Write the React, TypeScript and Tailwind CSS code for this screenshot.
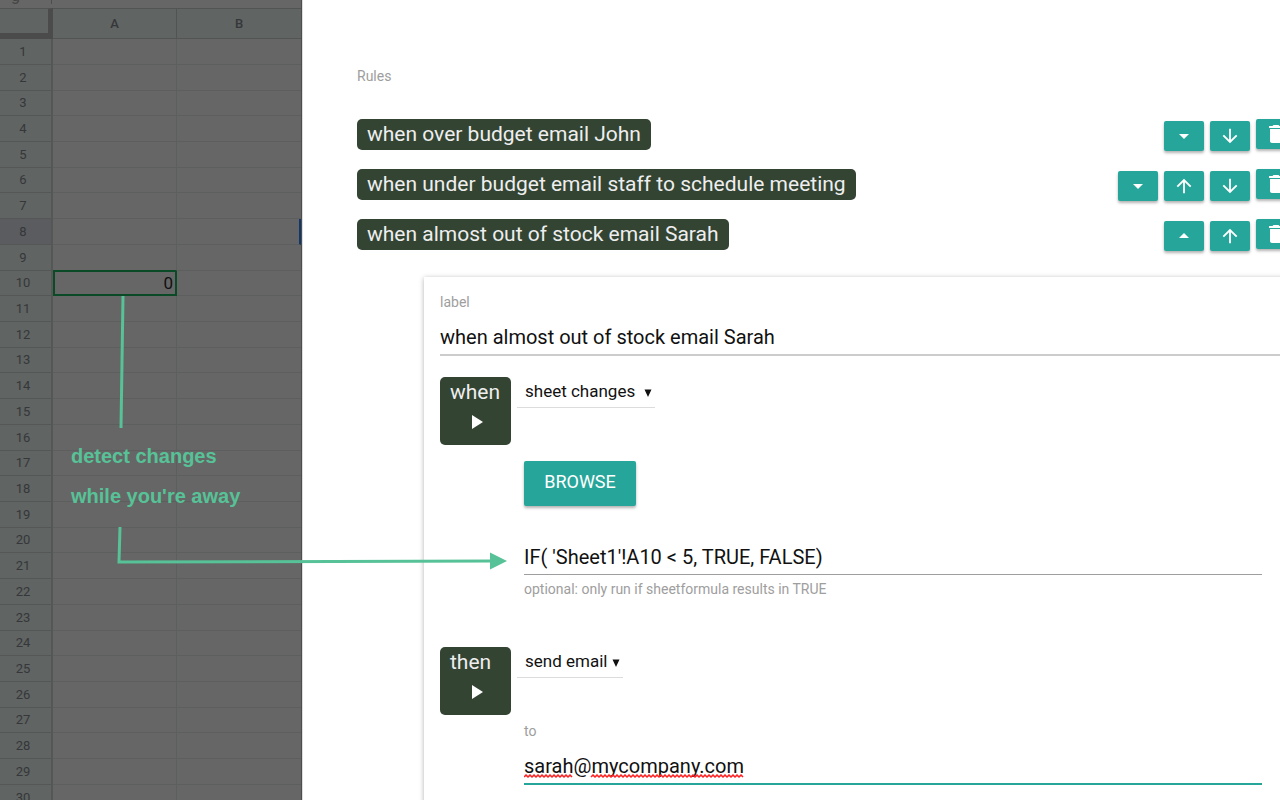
import { useState } from 'react';
import type { ReactNode } from 'react';
import {
  MdArrowDownward,
  MdArrowDropDown,
  MdArrowDropUp,
  MdArrowUpward,
  MdDelete,
  MdPlayArrow,
} from 'react-icons/md';

const ROWS = Array.from({ length: 30 }, (_, i) => i + 1);

const RULES = [
  { label: 'when over budget email John', open: false, up: false, down: true },
  { label: 'when under budget email staff to schedule meeting', open: false, up: true, down: true },
  { label: 'when almost out of stock email Sarah', open: true, up: true, down: false },
];

function Sheet() {
  return (
    <div className="w-[302px] shrink-0 overflow-hidden border-r border-[#4d4d4d] bg-[#666666]">
      <div className="flex h-2 items-start overflow-hidden">
        <span className="flex h-1 w-[51px] items-end pl-[11px] text-base leading-4 text-[#454545]">g</span>
        <span className="h-1 w-px bg-[#4d4d4d]" />
      </div>
      <table className="w-full table-fixed border-separate border-spacing-0 text-[#35373a]">
        <colgroup>
          <col className="w-[53px]" />
          <col className="w-[124px]" />
          <col />
        </colgroup>
        <thead>
          <tr className="h-[31px] bg-[#606462] text-[13px]">
            <td className="border-t border-r-[5px] border-b-[6px] border-t-[#525453] border-r-[#4b4b4b] border-b-[#4b4b4b]" />
            <th className="border-y border-r border-[#525453] p-0 font-medium">A</th>
            <th className="border-y border-[#525453] p-0 font-medium">B</th>
          </tr>
        </thead>
        <tbody>
          {ROWS.map((row) => (
            <tr key={row} className="h-[26px] nth-[7n+3]:h-[25px] nth-[7n+6]:h-[25px]">
              <th
                className={`border-r-2 border-b border-[#545756] p-0 pr-[5px] text-[13px] leading-4 font-normal ${
                  row === 8 ? 'bg-[#5a5c5f]' : 'bg-[#606462]'
                }`}
              >
                {row}
              </th>
              {row === 10 ? (
                <td className="border-2 border-t border-[#0b4a26] p-0 pr-0.5 text-right text-[17px] leading-4 text-[#111]">
                  0
                </td>
              ) : (
                <td
                  className={`border-r border-b border-[#5d5f5e] p-0 ${
                    row === 9 ? 'border-b-[#0b4a26]' : ''
                  }`}
                />
              )}
              <td
                className={`border-b border-[#5d5f5e] p-0 ${
                  row === 8 ? 'border-r-2 border-r-[#12366b]' : ''
                }`}
              />
            </tr>
          ))}
        </tbody>
      </table>
    </div>
  );
}

function Annotation() {
  return (
    <div className="pointer-events-none absolute top-0 left-0 text-[#57c297]">
      <svg width="520" height="580" fill="none" stroke="currentColor" strokeWidth="3">
        <path d="M123 296 L121 428" />
        <path d="M120 527 L119 562 L492 561" />
        <path d="M490 552.5 L507 561 L490 569.5 Z" fill="currentColor" stroke="none" />
      </svg>
      <p className="absolute top-[436px] left-[71px] font-['Liberation_Sans',sans-serif] text-xl leading-10 font-bold whitespace-nowrap">
        detect changes
        <br />
        while you&apos;re away
      </p>
    </div>
  );
}

function IconButton({ label, children }: { label: string; children: ReactNode }) {
  return (
    <button
      type="button"
      aria-label={label}
      className="flex h-[30px] w-10 items-center justify-center rounded-[2px] bg-[#26a69a] text-white shadow-[0_2px_3px_rgba(0,0,0,0.3)]"
    >
      {children}
    </button>
  );
}

function StepButton({ children }: { children: ReactNode }) {
  return (
    <button
      type="button"
      className="flex h-[68px] w-[71px] shrink-0 flex-col rounded-[5px] bg-[#334433] px-[10px] text-left text-[21px] leading-[30px] text-[#eee]"
    >
      {children}
      <MdPlayArrow size={24} className="mt-[3px] self-center text-white" />
    </button>
  );
}

function Picker({ label, value, className }: { label: string; value: string; className: string }) {
  return (
    <div className={`relative ${className}`}>
      <select
        aria-label={label}
        className="h-[31px] w-full appearance-none border-b border-[#dcdcdc] bg-transparent pb-[2px] pl-2 text-[17px] leading-7 text-[#111]"
      >
        <option>{value}</option>
      </select>
      <svg
        className="pointer-events-none absolute top-3 right-[3px]"
        width="8"
        height="8"
        viewBox="0 0 8 8"
        fill="#111"
      >
        <path d="M0.5 0.5h7L4 8z" />
      </svg>
    </div>
  );
}

// red wave under a misspelled word, 4px per period
function Squiggle({ x, width }: { x: number; width: number }) {
  const steps = Math.floor(width / 2);
  const d = Array.from({ length: steps }, (_, i) => `l2 ${i % 2 ? 2 : -2}`).join(' ');
  return <path d={`M${x} 3 ${d}`} />;
}

export default function App() {
  const [label, setLabel] = useState('when almost out of stock email Sarah');
  const [formula, setFormula] = useState("IF( 'Sheet1'!A10 < 5, TRUE, FALSE)");
  const [email, setEmail] = useState('sarah@mycompany.com');

  return (
    <div className="relative flex h-screen overflow-hidden bg-white font-[Roboto,sans-serif]">
      <Sheet />
      <main className="min-w-0 flex-1 overflow-hidden border-l border-[#ddd] pt-[66px] pl-[54px]">
        <div className="-mr-4">
          <p className="text-sm leading-5 text-[#9e9e9e]">Rules</p>

          <ul className="mt-[33px] space-y-[19px]">
            {RULES.map((rule) => (
              <li key={rule.label} className="flex h-[31px] items-start justify-between">
                <span className="rounded-[5px] bg-[#334433] px-[10px] pb-px text-[21px] leading-[30px] text-[#eee]">
                  {rule.label}
                </span>
                <div className="flex gap-[6px]">
                  <div className="flex gap-[6px] pt-[2px]">
                    <IconButton label={rule.open ? 'Collapse' : 'Expand'}>
                      {rule.open ? <MdArrowDropUp size={24} /> : <MdArrowDropDown size={24} />}
                    </IconButton>
                    {rule.up && (
                      <IconButton label="Move up">
                        <MdArrowUpward size={22} />
                      </IconButton>
                    )}
                    {rule.down && (
                      <IconButton label="Move down">
                        <MdArrowDownward size={22} />
                      </IconButton>
                    )}
                  </div>
                  <IconButton label="Delete">
                    <MdDelete size={24} />
                  </IconButton>
                </div>
              </li>
            ))}
          </ul>

          <section className="mt-[27px] ml-[67px] px-4 pt-[15px] pb-10 shadow-[0_1px_5px_rgba(0,0,0,0.3)]">
            <label htmlFor="rule-label" className="block text-sm leading-5 text-[#9e9e9e]">
              label
            </label>
            <input
              id="rule-label"
              value={label}
              onChange={(e) => setLabel(e.target.value)}
              className="mt-2 block h-9 w-full border-b-2 border-[#cccccc] text-xl text-[#111] outline-none"
            />

            <div className="mt-[21px] flex gap-[6px]">
              <StepButton>when</StepButton>
              <div className="min-w-0 flex-1">
                <Picker label="Trigger" value="sheet changes" className="w-[138px]" />
                <div className="pt-[53px] pr-[18px] pl-[7px]">
                  <button
                    type="button"
                    className="block h-[45px] w-28 rounded-[2px] bg-[#26a69a] pb-1 text-lg text-white shadow-[0_2px_3px_rgba(0,0,0,0.3)]"
                  >
                    BROWSE
                  </button>
                  <input
                    id="formula"
                    value={formula}
                    onChange={(e) => setFormula(e.target.value)}
                    className="mt-[33px] block h-9 w-full border-b border-[#9e9e9e] text-xl text-[#111] outline-none"
                  />
                  <label htmlFor="formula" className="mt-1 block text-sm leading-5 text-[#9e9e9e]">
                    optional: only run if sheetformula results in TRUE
                  </label>
                </div>
              </div>
            </div>

            <div className="mt-12 flex gap-[6px]">
              <StepButton>then</StepButton>
              <div className="min-w-0 flex-1">
                <Picker label="Action" value="send email" className="w-[106px]" />
                <div className="pt-[43px] pr-[18px] pl-[7px]">
                  <label htmlFor="to" className="block text-sm leading-5 text-[#9e9e9e]">
                    to
                  </label>
                  <div className="relative mt-2">
                    <input
                      id="to"
                      value={email}
                      onChange={(e) => setEmail(e.target.value)}
                      className="block h-9 w-full border-b-2 border-[#26a69a] text-xl text-[#111] outline-none"
                    />
                    <svg
                      className="pointer-events-none absolute bottom-[7px] left-0"
                      width="220"
                      height="4"
                      fill="none"
                      stroke="#f22"
                      strokeWidth="1.5"
                    >
                      <Squiggle x={0} width={49} />
                      <Squiggle x={67} width={152} />
                    </svg>
                  </div>
                </div>
              </div>
            </div>
          </section>
        </div>
      </main>
      <Annotation />
    </div>
  );
}
